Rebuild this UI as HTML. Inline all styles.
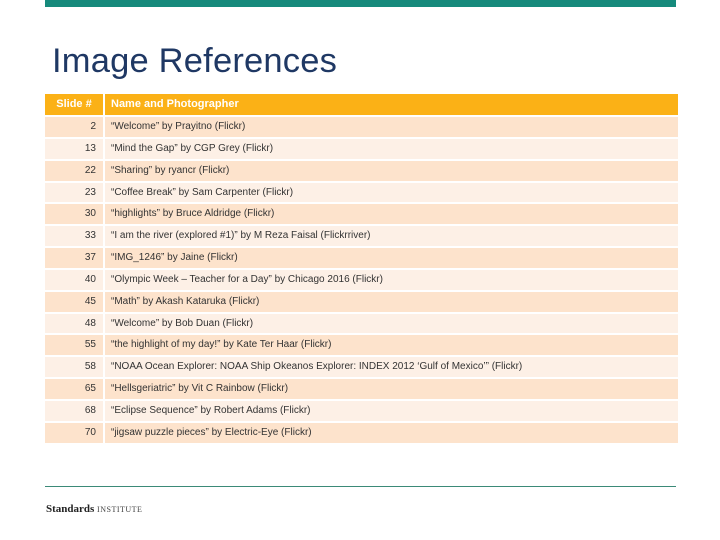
<html><head><style>
body{margin:0;width:720px;height:540px;background:#fff;position:relative;font-family:"Liberation Sans",sans-serif;overflow:hidden}
.top{position:absolute;left:45px;top:0;width:631px;height:7px;background:#168a7c}
h1{position:absolute;left:52px;top:42px;margin:0;font-weight:normal;font-size:34.5px;color:#1f3864;letter-spacing:0.2px}
table{position:absolute;left:45px;top:94px;width:633px;border-collapse:separate;border-spacing:0;font-size:10px;color:#333;table-layout:fixed}
td{padding:0;line-height:19.85px;border-top:2px solid #fff;white-space:nowrap}
td.n{text-align:right;padding-right:7px;border-right:2px solid #fff}
td.t{padding-left:6px}
tr.h td{background:#fbb116;color:#fff;font-weight:bold;font-size:11px;line-height:21px;border-top:0}
tr.h td.n{text-align:center;padding-right:0}
tr:nth-child(even) td{background:#fde3cc}
tr:nth-child(odd):not(.h) td{background:#fdf0e6}
.bl{position:absolute;left:45px;top:486px;width:631px;height:1px;background:#3b8a78}
.logo{position:absolute;left:46px;top:503px;font-family:"Liberation Serif",serif;font-size:11px;font-weight:bold;color:#222}
.logo span{font-weight:normal;font-size:8px;letter-spacing:0.5px;color:#444}
</style></head><body>
<div class="top"></div>
<h1>Image References</h1>
<table>
<colgroup><col style="width:60px"><col></colgroup>
<tr class="h"><td class="n">Slide #</td><td class="t">Name and Photographer</td></tr>
<tr><td class="n">2</td><td class="t">“Welcome” by Prayitno (Flickr)</td></tr>
<tr><td class="n">13</td><td class="t">“Mind the Gap” by CGP Grey (Flickr)</td></tr>
<tr><td class="n">22</td><td class="t">“Sharing” by ryancr (Flickr)</td></tr>
<tr><td class="n">23</td><td class="t">“Coffee Break” by Sam Carpenter (Flickr)</td></tr>
<tr><td class="n">30</td><td class="t">“highlights” by Bruce Aldridge (Flickr)</td></tr>
<tr><td class="n">33</td><td class="t">“I am the river (explored #1)” by M Reza Faisal (Flickrriver)</td></tr>
<tr><td class="n">37</td><td class="t">“IMG_1246” by Jaine (Flickr)</td></tr>
<tr><td class="n">40</td><td class="t">“Olympic Week – Teacher for a Day” by Chicago 2016 (Flickr)</td></tr>
<tr><td class="n">45</td><td class="t">“Math” by Akash Kataruka (Flickr)</td></tr>
<tr><td class="n">48</td><td class="t">“Welcome” by Bob Duan (Flickr)</td></tr>
<tr><td class="n">55</td><td class="t">“the highlight of my day!” by Kate Ter Haar (Flickr)</td></tr>
<tr><td class="n">58</td><td class="t">“NOAA Ocean Explorer: NOAA Ship Okeanos Explorer: INDEX 2012 ‘Gulf of Mexico’” (Flickr)</td></tr>
<tr><td class="n">65</td><td class="t">“Hellsgeriatric” by Vit C Rainbow (Flickr)</td></tr>
<tr><td class="n">68</td><td class="t">“Eclipse Sequence” by Robert Adams (Flickr)</td></tr>
<tr><td class="n">70</td><td class="t">“jigsaw puzzle pieces” by Electric-Eye (Flickr)</td></tr>
</table>
<div class="bl"></div>
<div class="logo">Standards <span>INSTITUTE</span></div>
</body></html>
